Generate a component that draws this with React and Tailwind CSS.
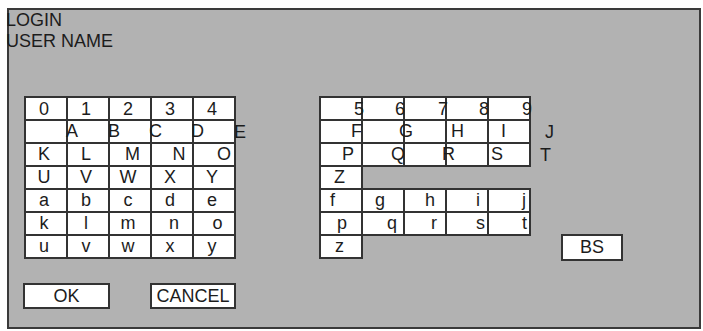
import React from "react";

const B = "border-[#333]";

function Cell({ t = "", cls = "", box = "" }) {
  return (
    <div className={"flex items-center shrink-0 w-[42px] border-r-2 border-b-2 border-[#333] bg-white " + box}>
      {t ? <span className={"relative z-10 shrink-0 whitespace-nowrap " + cls}>{t}</span> : null}
    </div>
  );
}

function Tail({ t, cls, box = "h-[23px]" }) {
  return (
    <div className={"w-0 flex items-center shrink-0 " + box}>
      <span className={"relative z-10 shrink-0 whitespace-nowrap " + cls}>{t}</span>
    </div>
  );
}

const DEF = "h-[23px] justify-center pr-[4px]";

function LeftGrid() {
  return (
    <div className={"flex flex-col border-l-2 border-t-2 ml-[15px] " + B}>
      <div className="flex">
        {["0", "1", "2", "3", "4"].map((t) => (
          <Cell key={t} t={t} box="h-[23px] justify-center pr-[4px] pt-[2px]" />
        ))}
      </div>
      <div className="flex">
        <Cell box="h-[23px]" />
        <Cell t="A" cls="-ml-[2px]" box="h-[23px]" />
        <Cell t="B" cls="-ml-[2px]" box="h-[23px]" />
        <Cell t="C" cls="-ml-[3px]" box="h-[23px]" />
        <Cell t="D" cls="-ml-[3px]" box="h-[23px]" />
        <Tail t="E" cls="-ml-[2px]" />
      </div>
      <div className="flex">
        <Cell t="K" box={DEF} />
        <Cell t="L" box={DEF} />
        <Cell t="M" box="h-[23px] justify-center pl-[5px]" />
        <Cell t="N" box="h-[23px] justify-center pl-[14px]" />
        <Cell t="O" box="h-[23px] justify-center pl-[20px]" />
      </div>
      <div className="flex">
        {["U", "V", "W", "X", "Y"].map((t) => (
          <Cell key={t} t={t} box={DEF} />
        ))}
      </div>
      <div className="flex">
        {["a", "b", "c", "d", "e"].map((t) => (
          <Cell key={t} t={t} box={DEF} />
        ))}
      </div>
      <div className="flex">
        <Cell t="k" box={DEF} />
        <Cell t="l" box={DEF} />
        <Cell t="m" box={DEF} />
        <Cell t="n" box="h-[23px] justify-center pl-[4px]" />
        <Cell t="o" box="h-[23px] justify-center pl-[7px]" />
      </div>
      <div className="flex">
        {["u", "v", "w", "x", "y"].map((t) => (
          <Cell key={t} t={t} box={DEF} />
        ))}
      </div>
    </div>
  );
}

function RightGrid() {
  const h = "h-[23px]";
  return (
    <div className={"flex flex-col border-l-2 border-t-2 ml-[83px] " + B}>
      <div className="flex">
        <Cell t="5" cls="ml-[33px]" box="h-[23px] pt-[2px]" />
        <Cell t="6" cls="ml-[32px]" box="h-[23px] pt-[2px]" />
        <Cell t="7" cls="ml-[33px]" box="h-[23px] pt-[2px]" />
        <Cell t="8" cls="ml-[32px]" box="h-[23px] pt-[2px]" />
        <Cell t="9" cls="ml-[33px]" box="h-[23px] pt-[2px]" />
      </div>
      <div className="flex">
        <Cell t="F" cls="ml-[30px]" box={h} />
        <Cell t="G" cls="ml-[36px]" box={h} />
        <Cell box={h} />
        <Cell t="H" cls="ml-[4px]" box={h} />
        <Cell t="I" cls="ml-[12px]" box={h} />
        <Tail t="J" cls="ml-[14px]" />
      </div>
      <div className="flex">
        <Cell t="P" cls="ml-[21px]" box={h} />
        <Cell t="Q" cls="ml-[28px]" box={h} />
        <Cell box={h} />
        <Cell t="R" cls="-ml-[5px]" box={h} />
        <Cell t="S" cls="ml-[2px]" box={h} />
        <Tail t="T" cls="ml-[9px]" />
      </div>
      <div className="flex">
        <div className="flex items-center shrink-0 w-[42px] h-[21px] border-r-2 border-[#333] bg-white">
          <span className="shrink-0 ml-[13px]">Z</span>
        </div>
      </div>
      <div className="flex">
        <Cell t="f" cls="ml-[9px]" box="h-[25px] border-t-2" />
        <Cell t="g" cls="ml-[12px]" box="h-[25px] border-t-2" />
        <Cell t="h" cls="ml-[20px]" box="h-[25px] border-t-2" />
        <Cell t="i" cls="ml-[29px]" box="h-[25px] border-t-2" />
        <Cell t="j" cls="ml-[33px]" box="h-[25px] border-t-2" />
      </div>
      <div className="flex">
        <Cell t="p" cls="ml-[16px]" box={h} />
        <Cell t="q" cls="ml-[24px]" box={h} />
        <Cell t="r" cls="ml-[26px]" box={h} />
        <Cell t="s" cls="ml-[29px]" box={h} />
        <Cell t="t" cls="ml-[33px]" box={h} />
      </div>
      <div className="flex">
        <Cell t="z" cls="ml-[14px]" box={h} />
      </div>
    </div>
  );
}

export default function App() {
  return (
    <div
      className="w-[703px] h-[331px] bg-white overflow-hidden pt-[8px] pl-[7px] text-[18px] text-[#1c1c1c]"
      style={{ fontFamily: '"Liberation Sans", Arial, sans-serif' }}
    >
      <div className="w-[694px] h-[321px] border-2 border-[#3a3a3a] bg-[#b2b2b2] flex flex-col">
        <div className="-ml-[3px] leading-[21px]">
          <div>LOGIN</div>
          <div>USER NAME</div>
        </div>
        <div className="flex items-start mt-[44px] leading-[21px]">
          <LeftGrid />
          <RightGrid />
          <div className="ml-[30px] mt-[138px] w-[62px] h-[27px] border-2 border-[#333] bg-white flex items-center justify-center">
            BS
          </div>
        </div>
        <div className="flex mt-[22px] leading-[21px]">
          <div className="ml-[14px] w-[87px] h-[26px] border-2 border-[#333] bg-white flex items-center justify-center">
            OK
          </div>
          <div className="ml-[40px] w-[86px] h-[26px] border-2 border-[#333] bg-white flex items-center justify-center">
            CANCEL
          </div>
        </div>
      </div>
    </div>
  );
}
